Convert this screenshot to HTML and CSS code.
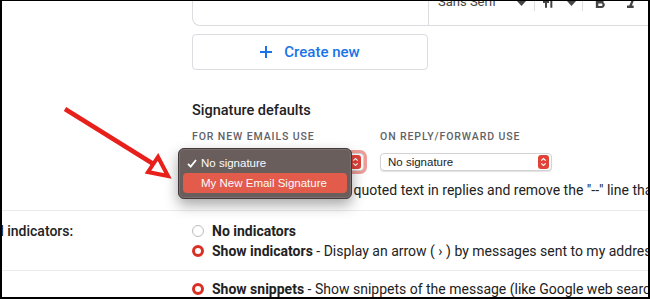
FILE: index.html
```html
<!DOCTYPE html>
<html lang="en">
<head>
<meta charset="utf-8">
<title>Gmail signature settings</title>
<link rel="stylesheet" href="styles.css">
</head>
<body>
<div class="frame">
  <div class="settings">
    <section class="row row-signature">
      <div class="label"></div>
      <div class="content">
        <div class="editor">
          <div class="editor-body"></div>
          <div class="toolbar">
            <span class="tb-font">Sans Serif</span>
            <svg class="tb-caret" viewBox="0 0 9 5" width="9" height="5"><path d="M0 0h9L4.5 5z" fill="#444"/></svg>
            <span class="tb-sep"></span>
            <svg class="tb-size" viewBox="0 0 24 24" width="16" height="16"><path d="M9 4v3h5v12h3V7h5V4H9zm-6 8h3v7h3v-7h3V9H3v3z" fill="#444"/></svg>
            <svg class="tb-caret tb-caret2" viewBox="0 0 9 5" width="9" height="5"><path d="M0 0h9L4.5 5z" fill="#444"/></svg>
            <span class="tb-sep tb-sep2"></span>
            <svg class="tb-bold" viewBox="0 0 24 24" width="20" height="20"><path d="M15.6 10.79c.97-.67 1.650-1.77 1.65-2.79 0-2.26-1.75-4-4-4H7v14h7.040c2.09 0 3.71-1.7 3.71-3.79 0-1.52-.86-2.82-2.15-3.42zM10 6.5h3c.83 0 1.5.67 1.5 1.5s-.67 1.5-1.5 1.5h-3v-3zm3.5 9H10v-3h3.5c.83 0 1.5.67 1.5 1.5s-.67 1.5-1.5 1.5z" fill="#444"/></svg>
            <svg class="tb-italic" viewBox="0 0 24 24" width="20" height="20"><path d="M10 4v3h2.21l-3.42 8H6v3h8v-3h-2.21l3.42-8H18V4z" fill="#444"/></svg>
          </div>
        </div>
        <button class="create-btn" type="button">
          <svg class="plus" viewBox="0 0 12 12" width="12" height="12"><path d="M6 0v12M0 6h12" stroke="#1a73e8" stroke-width="2"/></svg>
          <span>Create new</span>
        </button>
        <h3 class="defaults-title">Signature defaults</h3>
        <div class="defaults">
          <div class="default-col">
            <div class="cap">For new emails use</div>
            <div class="select focused"><span>No signature</span>
              <svg class="stepper" viewBox="0 0 11 14" width="11" height="14"><rect width="11" height="14" rx="3" fill="#e0433a"/><path d="M3.3 5.6 5.5 3.6 7.7 5.6M3.3 8.4 5.5 10.4 7.7 8.4" stroke="#fff" stroke-width="1.2" fill="none"/></svg>
            </div>
          </div>
          <div class="default-col">
            <div class="cap">On reply/forward use</div>
            <div class="select"><span>No signature</span>
              <svg class="stepper" viewBox="0 0 11 14" width="11" height="14"><rect width="11" height="14" rx="3" fill="#e0433a"/><path d="M3.3 5.6 5.5 3.6 7.7 5.6M3.3 8.4 5.5 10.4 7.7 8.4" stroke="#fff" stroke-width="1.2" fill="none"/></svg>
            </div>
          </div>
        </div>
        <div class="insert"><span class="checkbox"></span>Insert signature before quoted text in replies and remove the "--" line that precedes it.</div>
      </div>
    </section>
    <section class="row row-indicators">
      <div class="label">Personal level indicators:</div>
      <div class="content">
        <div class="option"><span class="radio"></span><b>No indicators</b></div>
        <div class="option"><span class="radio checked"></span><b>Show indicators</b>&nbsp;- Display an arrow ( › ) by messages sent to my address (not a mailing list), and a double arrow ( » ) by messages sent only to me.</div>
      </div>
    </section>
    <section class="row row-snippets">
      <div class="label"></div>
      <div class="content">
        <div class="option"><span class="radio checked"></span><b>Show snippets</b>&nbsp;- Show snippets of the message (like Google web search!).</div>
      </div>
    </section>
  </div>

  <div class="menu">
    <div class="menu-item">
      <svg class="check" viewBox="0 0 10 9" width="10" height="9"><path d="M1 4.8 3.7 7.6 9 1" stroke="#fff" stroke-width="1.8" fill="none"/></svg>
      <span>No signature</span>
    </div>
    <div class="menu-item active"><span>My New Email Signature</span></div>
  </div>

  <svg class="arrow" viewBox="0 0 650 299" width="650" height="299">
    <path d="M65 109 L155 165" stroke="#e8201c" stroke-width="4.5" stroke-linecap="butt"/>
    <polygon points="168,176 148,172 158,157" fill="#fff" stroke="#e8201c" stroke-width="4" stroke-linejoin="miter"/>
  </svg>
</div>
</body>
</html>
```

FILE: styles.css
```css
* { box-sizing: border-box; margin: 0; padding: 0; }
html, body { width: 650px; height: 299px; overflow: hidden; background: #fff; }
body { font-family: Roboto, "Liberation Sans", Arial, sans-serif; color: #222; }

.frame {
  position: relative;
  width: 650px;
  height: 299px;
  border-style: solid;
  border-color: #000;
  border-width: 1px 2px 2px 2px;
  overflow: hidden;
  background: #fff;
}

.row {
  display: grid;
  grid-template-columns: 190px 1fr;
  border-bottom: 1px solid #ebebeb;
}
.label {
  font-size: 14px;
  font-weight: 500;
  line-height: 20px;
  margin-left: -86px;
  white-space: nowrap;
  color: #222;
}
.content { min-width: 0; }

/* signature block */
.row-signature .content { padding-bottom: 10px; }

.editor {
  display: flex;
  height: 25px;
  border-left: 1px solid #dadce0;
  border-bottom: 1px solid #dadce0;
  border-bottom-left-radius: 8px;
}
.editor-body { width: 236px; flex: none; border-right: 1px solid #dadce0; }
.toolbar { display: flex; align-items: flex-start; padding-left: 9px; color: #444; }
.tb-font { font-size: 13px; line-height: 15px; margin-top: -7px; width: 79px; flex: none; }
.tb-caret { flex: none; margin-top: 0; }
.tb-sep { width: 1px; height: 10px; background: #ddd; margin-left: 8px; flex: none; }
.tb-size { flex: none; margin-left: 6px; margin-top: -6px; }
.tb-caret2 { margin-left: 10px; }
.tb-sep2 { margin-left: 6px; }
.tb-bold { flex: none; margin-left: 7px; margin-top: -8px; }
.tb-italic { flex: none; margin-left: 12px; margin-top: -8px; }

.create-btn {
  display: flex;
  align-items: center;
  justify-content: center;
  gap: 12px;
  width: 236px;
  height: 36px;
  margin-top: 8px;
  background: #fff;
  border: 1px solid #dadce0;
  border-radius: 4px;
  font-family: Roboto, sans-serif;
  font-size: 15px;
  font-weight: 500;
  color: #1a73e8;
}
.create-btn .plus { flex: none; }

.defaults-title {
  margin-top: 31px;
  font-size: 14.5px;
  font-weight: 500;
  line-height: 20px;
  color: #202124;
}
.defaults { display: grid; grid-template-columns: 188px 188px; margin-top: 9px; }
.cap {
  font-size: 10.5px;
  font-weight: 500;
  letter-spacing: 0.9px;
  text-transform: uppercase;
  line-height: 14px;
  color: #5f6368;
}
.select {
  display: flex;
  align-items: center;
  justify-content: space-between;
  width: 172px;
  height: 18px;
  margin-top: 9px;
  padding: 0 2px 0 7px;
  background: #fff;
  border: 1px solid #d3d3d3;
  border-radius: 4px;
  box-shadow: 0 1px 1px rgba(0, 0, 0, 0.12);
  font-family: "Liberation Sans", Arial, sans-serif;
  font-size: 11.5px;
  color: #222;
}
.select.focused { box-shadow: 0 0 0 3px rgba(226, 92, 84, 0.6); }

.insert {
  display: flex;
  align-items: center;
  gap: 4px;
  margin-top: 9px;
  font-size: 14px;
  line-height: 20px;
  white-space: nowrap;
}
.checkbox { width: 13px; height: 13px; border: 1px solid #888; border-radius: 2px; flex: none; }

/* options */
.row-indicators { padding: 10px 0 9px; }
.row-snippets { padding-top: 8px; border-bottom: none; }
.option {
  display: flex;
  align-items: center;
  font-size: 14px;
  line-height: 20px;
  white-space: nowrap;
  color: #222;
}
.option b { font-weight: 700; }
.radio {
  width: 12px;
  height: 12px;
  border-radius: 50%;
  border: 1px solid #bcbcbc;
  margin-right: 8px;
  flex: none;
  background: #fff;
}
.radio.checked { border: 3.5px solid #d93025; }

/* native popup menu */
.menu {
  position: absolute;
  left: 176px;
  top: 147px;
  width: 174px;
  height: 51px;
  padding: 4px;
  background: #6a5e5d;
  border: 1px solid #43393a;
  border-radius: 6px;
  box-shadow: inset 0 0 0 1px rgba(255, 255, 255, 0.12), 0 6px 14px rgba(0, 0, 0, 0.35);
  font-family: "Liberation Sans", Arial, sans-serif;
  font-size: 11.5px;
  color: #fafafa;
}
.menu-item {
  display: flex;
  align-items: center;
  height: 20px;
  padding-left: 18px;
  border-radius: 4px;
  position: relative;
}
.menu-item .check { position: absolute; left: 4px; top: 6px; }
.menu-item.active { background: #e35b4b; }

.arrow { position: absolute; left: -2px; top: -1px; pointer-events: none; }
```
